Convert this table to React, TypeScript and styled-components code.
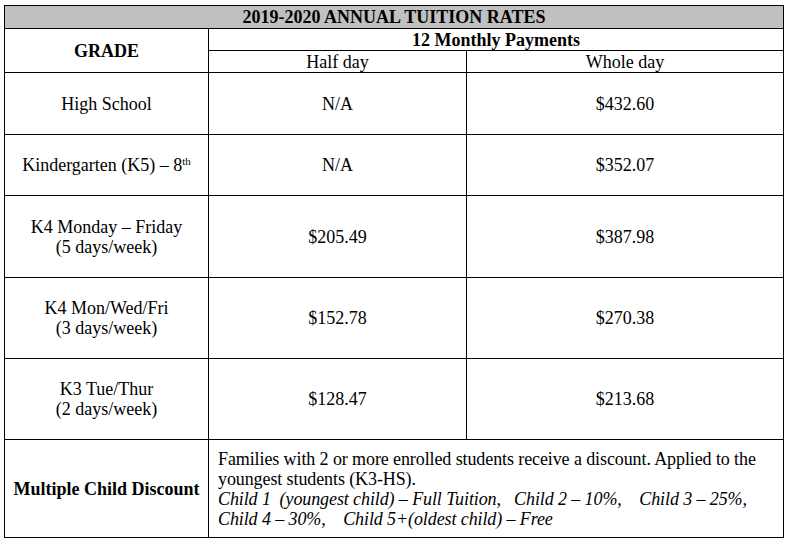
import React from "react";
import styled, { createGlobalStyle } from "styled-components";

const GlobalStyle = createGlobalStyle`
  html, body {
    margin: 0;
    padding: 0;
    background: #ffffff;
  }
  body {
    font-family: "Liberation Serif", "Times New Roman", serif;
    color: #000000;
  }
`;

const Page = styled.div`
  padding: 5px 0 0 4px;
`;

const Table = styled.table`
  border-collapse: collapse;
  table-layout: fixed;
  width: 779px;
  font-size: 18px;
`;

const Cell = styled.td<{ $bold?: boolean; $left?: boolean }>`
  border: 1px solid #000000;
  padding: 0 ${(p) => (p.$bold ? "2px" : "9px")};
  text-align: ${(p) => (p.$left ? "left" : "center")};
  vertical-align: middle;
  font-weight: ${(p) => (p.$bold ? 700 : 400)};
  white-space: ${(p) => (p.$bold ? "nowrap" : "normal")};
  line-height: 20px;
`;

const TitleCell = styled.th`
  border: 1px solid #000000;
  background: #c0c0c0;
  font-size: 18px;
  font-weight: 700;
  height: 22px;
  padding: 0;
  line-height: 20px;
`;

const HeadCell = styled.th<{ $bold?: boolean }>`
  border: 1px solid #000000;
  font-weight: ${(p) => (p.$bold ? 700 : 400)};
  padding: 0;
  height: 21px;
  line-height: 20px;
`;

const Row = styled.tr<{ $h: number }>`
  height: ${(p) => p.$h}px;
`;

const Sup = styled.sup`
  font-size: 11px;
  vertical-align: 6px;
  line-height: 0;
`;

const Note = styled.div`
  line-height: 20px;
  letter-spacing: -0.1px;
`;

const Terms = styled.div`
  font-style: italic;
  white-space: pre;
  line-height: 20px;
  letter-spacing: -0.1px;
`;

const rates = [
  { grade: "High School", half: "N/A", whole: "$432.60", h: 62 },
  { grade: "Kindergarten (K5) – 8", sup: "th", half: "N/A", whole: "$352.07", h: 61 },
  { grade: "K4 Monday – Friday", sub: "(5 days/week)", half: "$205.49", whole: "$387.98", h: 82 },
  { grade: "K4 Mon/Wed/Fri", sub: "(3 days/week)", half: "$152.78", whole: "$270.38", h: 81 },
  { grade: "K3 Tue/Thur", sub: "(2 days/week)", half: "$128.47", whole: "$213.68", h: 81 },
];

export default function App() {
  return (
    <Page>
      <GlobalStyle />
      <Table>
        <colgroup>
          <col style={{ width: 204 }} />
          <col style={{ width: 258 }} />
          <col style={{ width: 317 }} />
        </colgroup>
        <thead>
          <tr>
            <TitleCell colSpan={3}>2019-2020 ANNUAL TUITION RATES</TitleCell>
          </tr>
          <tr>
            <HeadCell $bold rowSpan={2}>
              GRADE
            </HeadCell>
            <HeadCell $bold colSpan={2}>
              12 Monthly Payments
            </HeadCell>
          </tr>
          <tr>
            <HeadCell>Half day</HeadCell>
            <HeadCell>Whole day</HeadCell>
          </tr>
        </thead>
        <tbody>
          {rates.map((r) => (
            <Row key={r.grade} $h={r.h}>
              <Cell>
                {r.grade}
                {r.sup && <Sup>{r.sup}</Sup>}
                {r.sub && (
                  <>
                    <br />
                    {r.sub}
                  </>
                )}
              </Cell>
              <Cell>{r.half}</Cell>
              <Cell>{r.whole}</Cell>
            </Row>
          ))}
          <Row $h={98}>
            <Cell $bold>Multiple Child Discount</Cell>
            <Cell $left colSpan={2}>
              <Note>
                Families with 2 or more enrolled students receive a discount. Applied to the
                <br />
                youngest students (K3-HS).
              </Note>
              <Terms>
                {"Child 1  (youngest child) – Full Tuition,   Child 2 – 10%,    Child 3 – 25%,\nChild 4 – 30%,    Child 5+(oldest child) – Free"}
              </Terms>
            </Cell>
          </Row>
        </tbody>
      </Table>
    </Page>
  );
}
